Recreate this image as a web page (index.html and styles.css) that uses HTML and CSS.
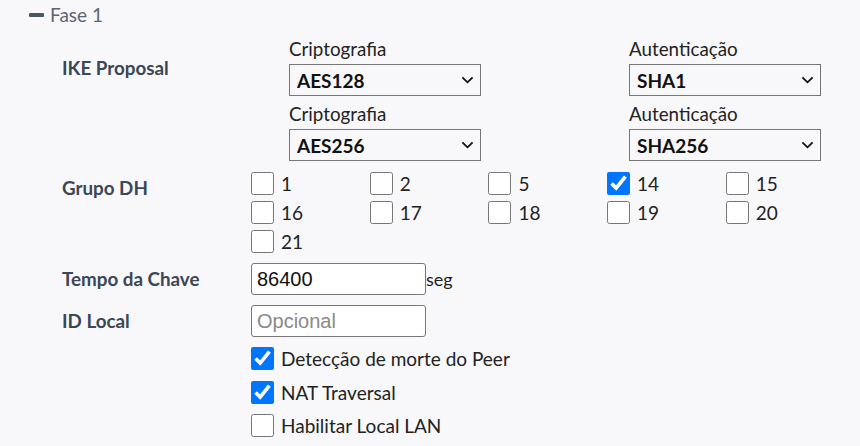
FILE: index.html
```html
<!DOCTYPE html>
<html lang="pt-BR">
  <head>
    <title>VPN IPsec - Fase 1</title>
    <meta charset="UTF-8" />
    <meta name="viewport" content="width=device-width" />
    <link rel="stylesheet" href="styles.css">
  </head>
  <body>
    <section class="phase">
      <h3 class="phase__title"><span class="phase__toggle"></span>Fase 1</h3>

      <div class="phase__body">
        <!-- propostas IKE -->
        <div class="row">
          <div class="row__label row__label--ike">IKE Proposal</div>
          <div class="proposals">
            <div class="proposal">
              <label class="proposal__caption" for="enc1">Criptografia</label>
              <div class="select">
                <select id="enc1"><option>AES128</option><option>AES256</option><option>3DES</option></select>
                <svg class="select__arrow" viewBox="0 0 14 8"><path d="M1.5 1.2 7 6.5 12.5 1.2" /></svg>
              </div>
            </div>
            <div class="proposal">
              <label class="proposal__caption" for="auth1">Autenticação</label>
              <div class="select">
                <select id="auth1"><option>SHA1</option><option>SHA256</option><option>MD5</option></select>
                <svg class="select__arrow" viewBox="0 0 14 8"><path d="M1.5 1.2 7 6.5 12.5 1.2" /></svg>
              </div>
            </div>
            <div class="proposal">
              <label class="proposal__caption" for="enc2">Criptografia</label>
              <div class="select">
                <select id="enc2"><option>AES256</option><option>AES128</option><option>3DES</option></select>
                <svg class="select__arrow" viewBox="0 0 14 8"><path d="M1.5 1.2 7 6.5 12.5 1.2" /></svg>
              </div>
            </div>
            <div class="proposal">
              <label class="proposal__caption" for="auth2">Autenticação</label>
              <div class="select">
                <select id="auth2"><option>SHA256</option><option>SHA1</option><option>MD5</option></select>
                <svg class="select__arrow" viewBox="0 0 14 8"><path d="M1.5 1.2 7 6.5 12.5 1.2" /></svg>
              </div>
            </div>
          </div>
        </div>

        <!-- grupos Diffie-Hellman -->
        <div class="row row--dh">
          <div class="row__label row__label--dh">Grupo DH</div>
          <div class="dh-groups">
            <label class="check"><input type="checkbox">1</label>
            <label class="check"><input type="checkbox">2</label>
            <label class="check"><input type="checkbox">5</label>
            <label class="check"><input type="checkbox" checked>14</label>
            <label class="check"><input type="checkbox">15</label>
            <label class="check"><input type="checkbox">16</label>
            <label class="check"><input type="checkbox">17</label>
            <label class="check"><input type="checkbox">18</label>
            <label class="check"><input type="checkbox">19</label>
            <label class="check"><input type="checkbox">20</label>
            <label class="check"><input type="checkbox">21</label>
          </div>
        </div>

        <div class="row row--center">
          <label class="row__label" for="lifetime">Tempo da Chave</label>
          <div class="field">
            <input class="text-input" id="lifetime" type="text" value="86400">
            <span class="field__unit">seg</span>
          </div>
        </div>

        <div class="row row--center">
          <label class="row__label" for="localid">ID Local</label>
          <div class="field">
            <input class="text-input" id="localid" type="text" placeholder="Opcional">
          </div>
        </div>

        <div class="row">
          <div class="row__label"></div>
          <div class="options">
            <label class="check"><input type="checkbox" checked>Detecção de morte do Peer</label>
            <label class="check"><input type="checkbox" checked>NAT Traversal</label>
            <label class="check"><input type="checkbox">Habilitar Local LAN</label>
          </div>
        </div>
      </div>
    </section>
  </body>
</html>
```

FILE: styles.css
```css
body {
  margin: 0;
  background-color: #f8f8fa;
  font-family: Lato, "Noto Sans", sans-serif;
  color: #222;
}

.phase {
  padding: 4px 0 0 29px;
}

.phase__title {
  display: flex;
  align-items: center;
  gap: 6px;
  margin: 0;
  font-size: 19px;
  font-weight: 400;
  line-height: 22px;
  color: #5b6575;
}

.phase__toggle {
  width: 15px;
  height: 4px;
  border-radius: 1px;
  background: #4b5566;
}

.phase__body {
  display: flex;
  flex-direction: column;
  gap: 10px;
  margin-top: 12px;
  padding-left: 33px;
}

.row {
  display: flex;
  align-items: flex-start;
}
.row--center {
  align-items: center;
}
.row--dh {
  margin-top: 1px;
}

.row__label {
  flex: none;
  width: 189px;
  font-size: 18.8px;
  font-weight: 700;
  line-height: 22px;
  color: #3b4656;
}
.row__label--ike {
  padding-top: 19px;
}
.row__label--dh {
  padding-top: 5px;
}

/* IKE proposals */

.proposals {
  display: grid;
  grid-template-columns: 192px 192px;
  column-gap: 148px;
  row-gap: 7px;
  padding-left: 38px;
}

.proposal__caption {
  display: block;
  margin-bottom: 4px;
  font-size: 18.8px;
  line-height: 22px;
  color: #222;
}

.select {
  position: relative;
}
.select select {
  appearance: none;
  display: block;
  width: 192px;
  height: 32px;
  padding: 0 7px;
  border: 1px solid #767676;
  border-radius: 0;
  background: transparent;
  font-family: Lato, sans-serif;
  font-size: 19px;
  font-weight: 700;
  color: #111;
}
.select__arrow {
  position: absolute;
  right: 7px;
  top: 12px;
  width: 13px;
  height: 8px;
  pointer-events: none;
}
.select__arrow path {
  fill: none;
  stroke: #111;
  stroke-width: 2;
}

/* checkboxes */

.dh-groups {
  display: grid;
  grid-template-columns: repeat(5, 118.7px);
  row-gap: 6px;
}

.check {
  display: flex;
  align-items: center;
  gap: 7px;
  font-size: 19px;
  line-height: 23px;
  color: #222;
}
.check input {
  width: 23px;
  height: 23px;
  margin: 0;
  accent-color: #0075ff;
}

.options {
  display: flex;
  flex-direction: column;
  gap: 10.5px;
}

/* text inputs */

.field {
  display: flex;
  align-items: center;
}

.text-input {
  box-sizing: border-box;
  width: 175px;
  height: 32px;
  padding: 0 5px;
  border: 1px solid #767676;
  border-radius: 3px;
  background: #fff;
  font-family: "Liberation Sans", Arial, sans-serif;
  font-size: 20px;
  color: #111;
}
.text-input::placeholder {
  color: #8a8a8a;
}

.field__unit {
  font-size: 18px;
  color: #222;
}
```
